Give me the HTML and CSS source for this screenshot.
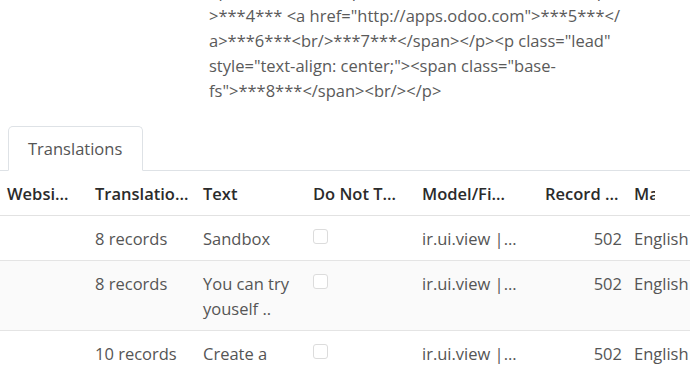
FILE: index.html
```html
<!DOCTYPE html>
<html lang="en">
<head>
	<meta charset="UTF-8">
	<title>Translations</title>
	<link rel="stylesheet" href="styles.css">
</head>
<body>
	<div class="source">
		<div class="line">&lt;p class="lead"&gt;&lt;span class="base-fs"&gt;***3***&lt;/span&gt;&lt;br/&gt;</div>
		<div class="line">&gt;***4*** &lt;a href="http://apps.odoo.com"&gt;***5***&lt;/</div>
		<div class="line">a&gt;***6***&lt;br/&gt;***7***&lt;/span&gt;&lt;/p&gt;&lt;p class="lead"</div>
		<div class="line">style="text-align: center;"&gt;&lt;span class="base-</div>
		<div class="line">fs"&gt;***8***&lt;/span&gt;&lt;br/&gt;&lt;/p&gt;</div>
	</div>

	<div class="tabs">
		<div class="tab">Translations</div>
	</div>

	<table class="list">
		<colgroup>
			<col style="width: 87px">
			<col style="width: 108px">
			<col style="width: 110px">
			<col style="width: 109px">
			<col style="width: 123px">
			<col style="width: 89px">
			<col style="width: 140px">
		</colgroup>
		<thead>
			<tr>
				<th class="first">Websi…</th>
				<th>Translatio…</th>
				<th>Text</th>
				<th>Do Not T…</th>
				<th>Model/Fi…</th>
				<th>Record …</th>
				<th><div class="clip">Ma</div></th>
			</tr>
		</thead>
		<tbody>
			<tr>
				<td class="first"></td>
				<td>8 records</td>
				<td>Sandbox</td>
				<td><span class="check"></span></td>
				<td>ir.ui.view |…</td>
				<td class="num">502</td>
				<td>English</td>
			</tr>
			<tr class="alt">
				<td class="first"></td>
				<td>8 records</td>
				<td>You can try youself ..</td>
				<td><span class="check"></span></td>
				<td>ir.ui.view |…</td>
				<td class="num">502</td>
				<td>English</td>
			</tr>
			<tr>
				<td class="first"></td>
				<td>10 records</td>
				<td>Create a</td>
				<td><span class="check"></span></td>
				<td>ir.ui.view |…</td>
				<td class="num">502</td>
				<td>English</td>
			</tr>
		</tbody>
	</table>
</body>
</html>
```

FILE: styles.css
```css
* {
	box-sizing: border-box;
	padding: 0;
	margin: 0;
}

html, body {
	overflow: hidden;
}

body {
	font-family: 'Open Sans', 'Noto Sans', sans-serif;
	font-size: 16.5px;
	line-height: 25px;
	color: #555;
	background: #fff;
	width: 690px;
	height: 371px;
}

.source {
	margin-top: -22px;
	padding-left: 209px;
	color: #5a5a5a;
}

.line {
	white-space: nowrap;
}

.tabs {
	margin-top: 23px;
	padding-left: 8px;
	border-bottom: 1px solid #dee2e6;
	display: flex;
}

.tab {
	height: 45px;
	margin-bottom: -1px;
	padding: 9px 20px 0 19px;
	border: 1px solid #dee2e6;
	border-bottom-color: #fff;
	border-radius: 5px 5px 0 0;
	color: #555;
	background: #fff;
}

.list {
	border-collapse: collapse;
	table-layout: fixed;
	width: 766px;
}

.list th,
.list td {
	padding: 10px 4px 9px 8px;
	text-align: left;
	vertical-align: top;
	border-bottom: 1px solid #e4e4e4;
	white-space: nowrap;
	overflow: hidden;
}

.list th {
	font-weight: 600;
	color: #2b2b2b;
	border-bottom-color: #e2e2e2;
}

.list td {
	white-space: normal;
}

.list .first {
	padding-left: 7px;
}

.list .num {
	text-align: right;
}

.list tr.alt td {
	background: #fafafa;
}

.clip {
	width: 21px;
	overflow: hidden;
}

.check {
	display: inline-block;
	width: 15px;
	height: 15px;
	margin-top: 3px;
	border: 1px solid #dcdcdc;
	border-radius: 3px;
	background: #fff;
	vertical-align: top;
}
```
